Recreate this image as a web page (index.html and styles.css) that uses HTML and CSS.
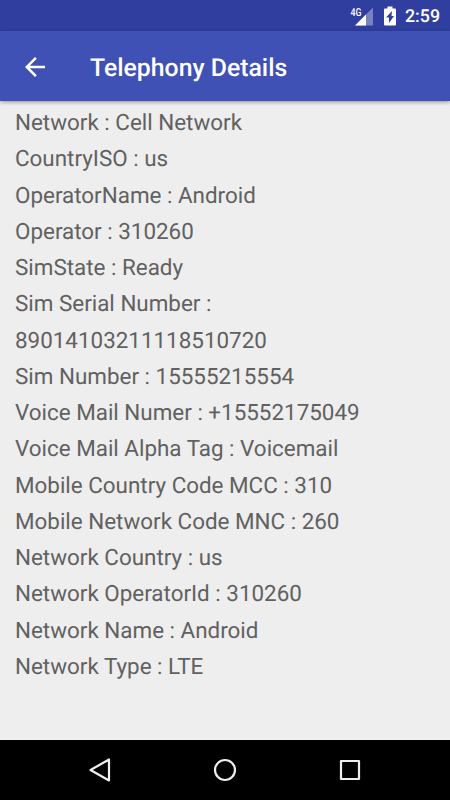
FILE: index.html
```html
<!DOCTYPE html>
<html lang="en">
<head>
<meta charset="utf-8">
<title>Telephony Details</title>
<link rel="stylesheet" href="styles.css">
</head>
<body>
<div class="screen">
  <div class="status-bar">
    <svg class="signal" width="24" height="22" viewBox="0 0 24 22">
      <path d="M24 2.500v18H6z" fill="#fff" fill-opacity=".35"/>
      <path d="M17 9.500v11H6z" fill="#fff"/>
      <text x="1.500" y="10.500" textLength="11" lengthAdjust="spacingAndGlyphs" class="network-type">4G</text>
    </svg>
    <svg class="battery" width="14" height="20" viewBox="0 0 14 20">
      <path fill="#fff" fill-rule="evenodd" d="M4.500.500h5v2H12q1 0 1 1v15q0 1-1 1H2q-1 0-1-1v-15q0-1 1-1h2.500zM9 5l-6 6.500h3V17l5-7H8.500z"/>
    </svg>
    <span class="clock">2:59</span>
  </div>
  <header class="app-bar">
    <svg class="back" width="30" height="30" viewBox="0 0 24 24"><path fill="#fff" d="M20 11H7.830l5.590-5.590L12 4l-8 8 8 8 1.410-1.410L7.830 13H20z"/></svg>
    <h1 class="title">Telephony Details</h1>
  </header>
  <main class="details">
    <p>Network : Cell Network</p>
    <p>CountryISO : us</p>
    <p>OperatorName : Android</p>
    <p>Operator : 310260</p>
    <p>SimState : Ready</p>
    <p>Sim Serial Number :<br>89014103211118510720</p>
    <p>Sim Number : 15555215554</p>
    <p>Voice Mail Numer : +15552175049</p>
    <p>Voice Mail Alpha Tag : Voicemail</p>
    <p>Mobile Country Code MCC : 310</p>
    <p>Mobile Network Code MNC : 260</p>
    <p>Network Country : us</p>
    <p>Network OperatorId : 310260</p>
    <p>Network Name : Android</p>
    <p>Network Type : LTE</p>
  </main>
  <nav class="nav-bar">
    <svg width="30" height="30" viewBox="0 0 30 30"><path d="M24 4.500v21L5.500 15z"/></svg>
    <svg width="30" height="30" viewBox="0 0 30 30"><circle cx="15" cy="15" r="10"/></svg>
    <svg width="30" height="30" viewBox="0 0 30 30"><path d="M6 6h18v18H6z"/></svg>
  </nav>
</div>
</body>
</html>
```
FILE: styles.css
```css
* { box-sizing: border-box; }
body { margin: 0; font-family: Roboto, sans-serif; text-rendering: geometricPrecision; }
.screen { width: 450px; height: 800px; display: flex; flex-direction: column; background: #eee; overflow: hidden; }
.status-bar { height: 31px; flex: none; display: flex; justify-content: flex-end; align-items: center; padding-right: 10px; background: #303f9f; color: #fff; }
.network-type { font: 500 11px Roboto, sans-serif; fill: #fff; }
.battery { margin: 0 8px 0 10px; }
.clock { font-size: 17.8px; font-weight: 500; line-height: 31px; margin-top: 1px; }
.app-bar { height: 70px; flex: none; display: flex; align-items: center; padding-left: 20px; background: #3f51b5; box-shadow: 0 1px 4px rgba(0,0,0,.4); }
.title { margin: 4px 0 0 40px; font-size: 24.8px; font-weight: 500; color: #fff; }
.back { margin-top: 1px; }
.details { flex: 1; padding: 4px 15px 0; font-size: 22.42px; line-height: 36.25px; color: #616161; }
.details p { margin: 0; white-space: nowrap; }
.nav-bar { height: 60px; flex: none; display: flex; justify-content: center; align-items: center; gap: 95px; background: #000; }
.nav-bar svg { fill: none; stroke: #eee; stroke-width: 2.2; stroke-linejoin: round; }
```
